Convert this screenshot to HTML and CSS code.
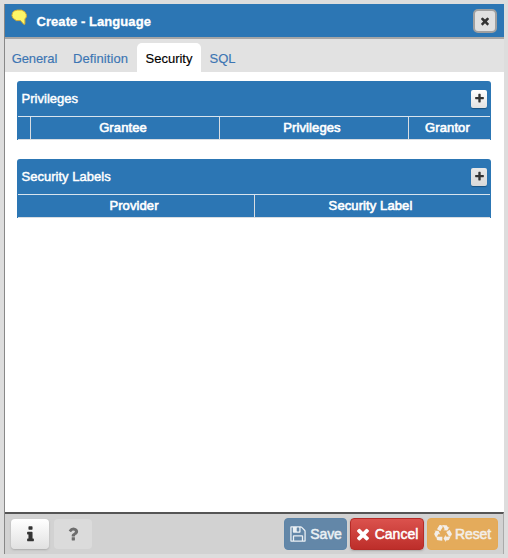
FILE: index.html
```html
<!DOCTYPE html>
<html lang="en">
<head>
<meta charset="utf-8">
<title>Create - Language</title>
<link rel="stylesheet" href="styles.css">
</head>
<body>
<svg class="defs" aria-hidden="true">
<symbol id="times" viewBox="0 0 1792 1792"><path d="M1490 1322q0 40-28 68l-136 136q-28 28-68 28t-68-28l-294-294-294 294q-28 28-68 28t-68-28l-136-136q-28-28-28-68t28-68l294-294-294-294q-28-28-28-68t28-68l136-136q28-28 68-28t68 28l294 294 294-294q28-28 68-28t68 28l136 136q28 28 28 68t-28 68l-294 294 294 294q28 28 28 68z"/></symbol>
<symbol id="plus" viewBox="0 0 1792 1792"><path d="M1600 736v192q0 40-28 68t-68 28h-416v416q0 40-28 68t-68 28h-192q-40 0-68-28t-28-68v-416h-416q-40 0-68-28t-28-68v-192q0-40 28-68t68-28h416v-416q0-40 28-68t68-28h192q40 0 68 28t28 68v416h416q40 0 68 28t28 68z"/></symbol>
<symbol id="info" viewBox="0 0 1792 1792"><path d="M1216 1344v128q0 26-19 45t-45 19h-512q-26 0-45-19t-19-45v-128q0-26 19-45t45-19h64v-384h-64q-26 0-45-19t-19-45v-128q0-26 19-45t45-19h384q26 0 45 19t19 45v576h64q26 0 45 19t19 45zm-128-1152v192q0 26-19 45t-45 19h-256q-26 0-45-19t-19-45v-192q0-26 19-45t45-19h256q26 0 45 19t19 45z"/></symbol>
<symbol id="question" viewBox="0 0 1792 1792"><path d="M1088 1256v240q0 16-12 28t-28 12h-240q-16 0-28-12t-12-28v-240q0-16 12-28t28-12h240q16 0 28 12t12 28zm316-600q0 54-15.5 101t-35 76.5-55 59.5-57.5 43.5-61 35.5q-41 23-68.5 65t-27.5 67q0 17-12 32.5t-28 15.5h-240q-15 0-25.5-18.5t-10.5-37.5v-45q0-83 65-156.5t143-108.5q59-27 84-56t25-76q0-42-46.5-74t-107.5-32q-65 0-108 29-35 25-107 115-13 16-31 16-12 0-25-8l-164-125q-13-10-15.5-25t5.5-28q160-266 464-266 80 0 161 31t146 83 106 127.5 41 158.5z"/></symbol>
<symbol id="floppy" viewBox="0 0 1792 1792"><path d="M512 1536h768v-384h-768v384zm896 0h128v-896q0-14-10-38.5t-20-34.5l-281-281q-10-10-34-20t-39-10v416q0 40-28 68t-68 28h-576q-40 0-68-28t-28-68v-416h-128v1280h128v-416q0-40 28-68t68-28h832q40 0 68 28t28 68v416zm-384-928v-320q0-13-9.5-22.5t-22.5-9.5h-192q-13 0-22.5 9.5t-9.5 22.5v320q0 13 9.5 22.5t22.5 9.5h192q13 0 22.5-9.5t9.5-22.5zm640 32v928q0 40-28 68t-68 28h-1344q-40 0-68-28t-28-68v-1344q0-40 28-68t68-28h928q40 0 88 20t76 48l280 280q28 28 48 76t20 88z"/></symbol>
<symbol id="recycle" viewBox="0 0 1792 1792"><path d="M836 1169l-15 368-2 22-420-29q-36-3-67-31.5t-47-65.5q-11-27-14.5-55t4-65 12-55 21.5-64 19-53q78 12 509 28zm-387-586l180 379-147-92q-63 72-111.5 144.5t-72.5 125-39.5 94.5-18.5 63l-4 21-190-357q-17-26-18-56t6-47l8-18q35-63 114-188l-140-86zm1231 517l-188 359q-12 29-36.5 46.5t-43.5 20.5l-18 4q-71 7-219 12l8 164-230-367 211-362 7 173q170 16 283 5t170-33zm-785-924q-47 63-265 435l-317-187-19-12 225-356q20-31 60-45t80-10q24 2 48.5 12t42 21 41.5 33 36 34.5 36 39.5 32 35zm655 307l212 363q18 37 12.5 76t-27.5 74q-13 20-33 37t-38 28-48.5 22-47 16-51.5 14-46 12q-34-72-265-436l313-195zm-143-226l142-83-220 373-419-20 151-86q-34-89-75-166t-75.5-123.5-64.5-80-47-46.5l-17-13 405 1q31-3 58 10.5t39 28.5l11 15q39 61 112 190z"/></symbol>
</svg>
<div class="dialog">
  <header class="title-bar">
    <svg class="bubble" viewBox="0 0 16 16"><path d="M6.2 1.1h4.3l3.2 1.6 1.6 2.8v2.6l-1.4 1.8v5.3h-1.2L9.5 11.6H5.3L2 9.2.9 6.6l.7-3L3.4 1.9z"/></svg>
    <h1>Create - Language</h1>
    <button class="close" aria-label="Close"><svg><use href="#times"/></svg></button>
  </header>
  <nav class="tabs">
    <a class="tab general">General</a><a class="tab definition">Definition</a><a class="tab active">Security</a><a class="tab sql">SQL</a>
  </nav>
  <main>
    <section class="grid-panel">
      <div class="panel-head"><h2>Privileges</h2><button class="add" aria-label="Add privilege"><svg><use href="#plus"/></svg></button></div>
      <div class="columns privileges"><span></span><span>Grantee</span><span>Privileges</span><span>Grantor</span></div>
    </section>
    <section class="grid-panel">
      <div class="panel-head"><h2>Security Labels</h2><button class="add muted" aria-label="Add label"><svg><use href="#plus"/></svg></button></div>
      <div class="columns security"><span>Provider</span><span>Security Label</span></div>
    </section>
  </main>
  <footer>
    <button class="btn info" aria-label="Information"><svg><use href="#info"/></svg></button>
    <button class="btn help" aria-label="Help"><svg><use href="#question"/></svg></button>
    <button class="btn save"><svg><use href="#floppy"/></svg><span>Save</span></button>
    <button class="btn cancel"><svg><use href="#times"/></svg><span>Cancel</span></button>
    <button class="btn reset"><svg><use href="#recycle"/></svg><span>Reset</span></button>
  </footer>
</div>
</body>
</html>
```
FILE: styles.css
```css
* { box-sizing: border-box; }
body {
  margin: 0;
  padding: 4px;
  height: 558px;
  background: #ddd;
  font: 13px "Liberation Sans", Arial, sans-serif;
  overflow: hidden;
}
.defs { display: none; }
h1, h2 { margin: 0; font-size: 13px; font-weight: normal; white-space: nowrap; }
button { font: inherit; margin: 0; padding: 0; border: 0; display: flex; align-items: center; justify-content: center; flex: none; }
svg { fill: currentColor; flex: none; }
.dialog {
  width: 500px;
  height: 550px;
  display: flex;
  flex-direction: column;
  background: #fff;
  border-left: 1px solid #888;
}
.title-bar {
  height: 35px;
  display: flex;
  align-items: center;
  padding: 0 7px 0 6px;
  background: #2c76b4;
  border-bottom: 2px solid #a6a6a6;
  color: #fff;
}
.bubble { width: 16px; height: 16px; margin-bottom: 7px; fill: #fbf668; stroke: #d5ae35; stroke-width: 1; }
h1 { margin-left: 9.5px; margin-right: auto; padding-top: 1px; font-weight: bold; letter-spacing: .06px; -webkit-text-stroke: .3px #fff; }
.close { width: 24px; height: 24px; margin-top: 1px; background: #e0e0e0; border: 2px solid #a0a0a0; border-radius: 5px; color: #333; }
.close svg { width: 12px; height: 12px; }
.tabs { height: 33px; display: flex; align-items: flex-end; background: #e2e2e2; color: #3c75b3; }
.tab { height: 29px; line-height: 31px; text-align: center; border-radius: 5px 5px 0 0; -webkit-text-stroke: .15px currentColor; }
.general { width: 59px; letter-spacing: -.1px; }
.definition { width: 73px; letter-spacing: .1px; }
.active { width: 64px; background: #fff; color: #000; }
.sql { width: 43px; }
main { flex: 1; padding: 9px 13px 0 12px; display: flex; flex-direction: column; gap: 19px; }
.grid-panel { height: 59px; background: #2c76b4; color: #fff; border-radius: 3px 3px 0 0; }
.panel-head { height: 35px; display: flex; align-items: center; justify-content: space-between; padding: 0 4px; }
h2 { padding-left: .5px; letter-spacing: .02px; -webkit-text-stroke: .45px #fff; }
.add { width: 16px; height: 18px; border-radius: 2px; background: linear-gradient(#fff, #e2e2e2); color: #333; box-shadow: 0 1px 1px #195381; }
.add.muted { background: linear-gradient(#e8e8e8, #d9d9d9); }
.add svg { width: 11px; height: 11px; }
.columns { height: 24px; margin: 0 1px; display: grid; border-top: 1px solid #d8e4ee; border-bottom: 1px solid #d8dde2; }
.columns span { text-align: center; line-height: 21px; border-right: 1px solid #d8dde2; padding-right: 4px; letter-spacing: .1px; white-space: nowrap; -webkit-text-stroke: .6px #fff; }
.columns span:last-child { border-right: 0; }
.privileges { grid-template-columns: 13px 189px 189px 1fr; }
.security { grid-template-columns: 237px 1fr; }
footer { height: 42px; display: flex; align-items: center; background: #d2d2d2; border-top: 2px solid #555; border-right: 1px solid #aaa; padding: 0 5px 0 6px; }
.btn { height: 32px; border-radius: 4px; gap: 3px; color: #fff; font-size: 14px; }
.btn span { -webkit-text-stroke: .5px currentColor; }
.btn svg { width: 18px; height: 18px; }
.info { width: 38px; height: 30px; background: linear-gradient(#fff, #e1e1e1); color: #333; box-shadow: 0 1px 2px #aaa; margin-right: 5px; }
.btn.info svg { width: 19px; height: 19px; }
.help { width: 38px; height: 30px; background: #dbdbdb; color: #6d6d6d; margin-right: auto; }
.save { width: 63px; background: #6387a8; border: 1px solid #5e85a8; color: #eaf0f4; margin-right: 3px; }
.save span { letter-spacing: -.15px; }
.cancel { width: 74px; padding-right: 2px; background: linear-gradient(#db524d, #bd2e2a); border: 1px solid #b52b27; box-shadow: 0 1px 2px #aaa; margin-right: 3px; }
.reset { width: 71px; background: #e4ab5b; border: 1px solid #e5a954; color: #f3eee8; }
.reset span { letter-spacing: -.15px; }
```
